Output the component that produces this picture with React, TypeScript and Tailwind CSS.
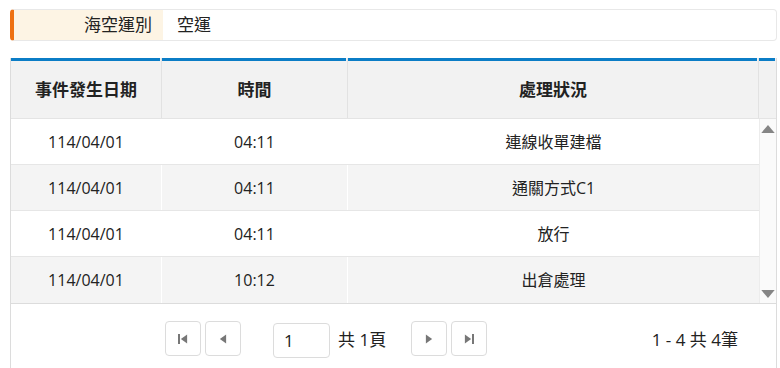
import React from "react";

type Row = { date: string; time: string; status: string };

const rows: Row[] = [
  { date: "114/04/01", time: "04:11", status: "連線收單建檔" },
  { date: "114/04/01", time: "04:11", status: "通關方式C1" },
  { date: "114/04/01", time: "04:11", status: "放行" },
  { date: "114/04/01", time: "10:12", status: "出倉處理" },
];

const cols = ["w-[151px]", "w-[186px]", "w-[411px]"];

const PagerButton: React.FC<{ children: React.ReactNode }> = ({ children }) => (
  <button className="flex h-[35px] w-[36px] items-center justify-center rounded-[4px] border border-[#dcdcdc] bg-white">
    {children}
  </button>
);

const Tri: React.FC<{ dir: "left" | "right" | "up" | "down"; className?: string }> = ({ dir, className }) => {
  const pts = {
    left: "8,0 8,10 1,5",
    right: "1,0 1,10 8,5",
    up: "0,8 12,8 6,1",
    down: "0,1 12,1 6,8",
  }[dir];
  const vb = dir === "up" || dir === "down" ? "0 0 12 9" : "0 0 9 10";
  return (
    <svg viewBox={vb} className={className} fill="currentColor">
      <polygon points={pts} />
    </svg>
  );
};

export default function App() {
  return (
    <div
      className="h-[368px] w-[780px] overflow-hidden bg-white pl-[10px] pr-[3px] pt-[9px] text-[#222]"
      style={{ fontFamily: '"Open Sans", "Noto Sans CJK TC", sans-serif' }}
    >
      {/* shipping mode field */}
      <div className="flex h-[32px] overflow-hidden rounded-[4px] border border-l-[4px] border-[#e8e8e8] border-l-[#ee7011]">
        <div className="flex w-[149px] items-center justify-end bg-[#fdf4e4] pr-[11px] text-[17px]">海空運別</div>
        <div className="flex items-center pl-[14px] text-[17px]">空運</div>
      </div>

      {/* event grid */}
      <div className="mt-[17px] border-x border-b border-[#dcdcdc]">
        <div className="flex h-[60px] bg-[#f2f2f2] text-[17px] font-bold">
          {["事件發生日期", "時間", "處理狀況", ""].map((t, i) => (
            <div
              key={i}
              className={`flex flex-col border-r border-[#e2e2e2] last:border-r-0 ${i < 3 ? cols[i] : "flex-1"}`}
            >
              <div className="mr-px h-[3px] bg-[#0b7dc6]" />
              <div className="flex flex-1 items-center justify-center">{t}</div>
            </div>
          ))}
        </div>

        <div className="flex border-t border-[#e4e4e4]">
          <div className="w-[748px]">
            {rows.map((r, i) => (
              <div
                key={i}
                className={`flex h-[46px] border-b border-[#e6e6e6] text-[16px] last:border-b-0 ${i % 2 ? "bg-[#f4f4f4]" : "bg-white"}`}
              >
                <div className={`${cols[0]} flex items-center justify-center border-r border-white`}>{r.date}</div>
                <div className={`${cols[1]} flex items-center justify-center border-r border-white`}>{r.time}</div>
                <div className={`${cols[2]} flex items-center justify-center`}>{r.status}</div>
              </div>
            ))}
          </div>
          <div className="flex flex-1 flex-col items-center justify-between border-l border-[#ececec] bg-[#fafafa] pb-[4px] pt-[5px] text-[#858585]">
            <Tri dir="up" className="h-[10px] w-[14px]" />
            <Tri dir="down" className="h-[10px] w-[14px]" />
          </div>
        </div>

        {/* pager */}
        <div className="flex h-[66px] items-start border-t border-[#dcdcdc] pt-[17px] text-[16px]">
          <div className="ml-[154px] flex gap-[4px]">
            <PagerButton>
              <span className="flex items-center text-[#777]">
                <span className="h-[10px] w-[2px] bg-current" />
                <Tri dir="left" className="h-[10px] w-[8px]" />
              </span>
            </PagerButton>
            <PagerButton>
              <Tri dir="left" className="h-[10px] w-[8px] text-[#777]" />
            </PagerButton>
          </div>
          <div className="ml-[32px] mt-[2px] flex h-[35px] w-[57px] items-center rounded-[4px] border border-[#dcdcdc] pl-[10px] text-[17px]">
            1
          </div>
          <div className="ml-[8px] mt-[2px] flex h-[33px] items-center text-[17px]">共 1頁</div>
          <div className="ml-[25px] flex gap-[4px]">
            <PagerButton>
              <Tri dir="right" className="h-[10px] w-[8px] text-[#777]" />
            </PagerButton>
            <PagerButton>
              <span className="flex items-center text-[#777]">
                <Tri dir="right" className="h-[10px] w-[8px]" />
                <span className="h-[10px] w-[2px] bg-current" />
              </span>
            </PagerButton>
          </div>
          <div className="ml-auto mr-[38px] mt-[2px] flex h-[33px] items-center text-[17px]">1 - 4 共 4筆</div>
        </div>
      </div>
    </div>
  );
}
